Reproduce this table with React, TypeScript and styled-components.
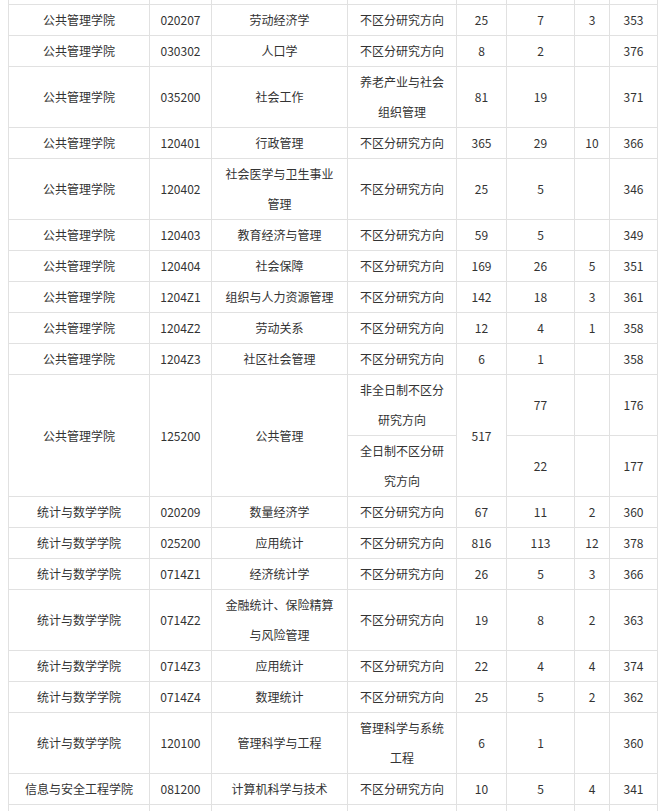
import React from "react";
import styled, { createGlobalStyle } from "styled-components";

const Global = createGlobalStyle`
  html, body { margin: 0; padding: 0; background: #ffffff; }
  body { overflow: hidden; }
`;

const Page = styled.div`
  padding: 0 0 0 8px;
  font-family: "Noto Sans CJK SC", "Microsoft YaHei", sans-serif;
  font-size: 12px;
  color: #333333;
`;

const Table = styled.table`
  border-collapse: collapse;
  table-layout: fixed;
  width: 650px;
  margin-top: -1px;
  background: #ffffff;
`;

const Row = styled.tr<{ $h?: number }>`
  ${(p) => (p.$h ? `height: ${p.$h}px;` : "")}
`;

const Cell = styled.td`
  border: 1px solid #e1e1e1;
  padding: 0 10px;
  line-height: 30px;
  text-align: center;
  vertical-align: middle;
  word-break: break-all;
  overflow: hidden;
`;

const widths = [141, 62, 136, 109, 50, 68, 35, 48];

type R = [string, string, string, string, string, string, string, string];

const before: R[] = [
  ["公共管理学院", "020207", "劳动经济学", "不区分研究方向", "25", "7", "3", "353"],
  ["公共管理学院", "030302", "人口学", "不区分研究方向", "8", "2", "", "376"],
  ["公共管理学院", "035200", "社会工作", "养老产业与社会组织管理", "81", "19", "", "371"],
  ["公共管理学院", "120401", "行政管理", "不区分研究方向", "365", "29", "10", "366"],
  ["公共管理学院", "120402", "社会医学与卫生事业管理", "不区分研究方向", "25", "5", "", "346"],
  ["公共管理学院", "120403", "教育经济与管理", "不区分研究方向", "59", "5", "", "349"],
  ["公共管理学院", "120404", "社会保障", "不区分研究方向", "169", "26", "5", "351"],
  ["公共管理学院", "1204Z1", "组织与人力资源管理", "不区分研究方向", "142", "18", "3", "361"],
  ["公共管理学院", "1204Z2", "劳动关系", "不区分研究方向", "12", "4", "1", "358"],
  ["公共管理学院", "1204Z3", "社区社会管理", "不区分研究方向", "6", "1", "", "358"],
];

const after: R[] = [
  ["统计与数学学院", "020209", "数量经济学", "不区分研究方向", "67", "11", "2", "360"],
  ["统计与数学学院", "025200", "应用统计", "不区分研究方向", "816", "113", "12", "378"],
  ["统计与数学学院", "0714Z1", "经济统计学", "不区分研究方向", "26", "5", "3", "366"],
  ["统计与数学学院", "0714Z2", "金融统计、保险精算与风险管理", "不区分研究方向", "19", "8", "2", "363"],
  ["统计与数学学院", "0714Z3", "应用统计", "不区分研究方向", "22", "4", "4", "374"],
  ["统计与数学学院", "0714Z4", "数理统计", "不区分研究方向", "25", "5", "2", "362"],
  ["统计与数学学院", "120100", "管理科学与工程", "管理科学与系统工程", "6", "1", "", "360"],
  ["信息与安全工程学院", "081200", "计算机科学与技术", "不区分研究方向", "10", "5", "4", "341"],
];

const DataRow = ({ r }: { r: R }) => (
  <Row>
    {r.map((v, i) => (
      <Cell key={i}>{v}</Cell>
    ))}
  </Row>
);

const EmptyRow = ({ h }: { h: number }) => (
  <Row $h={h}>
    {widths.map((_, i) => (
      <Cell key={i} />
    ))}
  </Row>
);

export default function App() {
  return (
    <>
      <Global />
      <Page>
        <Table>
          <colgroup>
            {widths.map((w, i) => (
              <col key={i} style={{ width: w }} />
            ))}
          </colgroup>
          <tbody>
            <EmptyRow h={5} />
            {before.map((r, i) => (
              <DataRow key={"b" + i} r={r} />
            ))}
            <Row>
              <Cell rowSpan={2}>公共管理学院</Cell>
              <Cell rowSpan={2}>125200</Cell>
              <Cell rowSpan={2}>公共管理</Cell>
              <Cell>非全日制不区分研究方向</Cell>
              <Cell rowSpan={2}>517</Cell>
              <Cell>77</Cell>
              <Cell></Cell>
              <Cell>176</Cell>
            </Row>
            <Row>
              <Cell>全日制不区分研究方向</Cell>
              <Cell>22</Cell>
              <Cell></Cell>
              <Cell>177</Cell>
            </Row>
            {after.map((r, i) => (
              <DataRow key={"a" + i} r={r} />
            ))}
            <EmptyRow h={31} />
          </tbody>
        </Table>
      </Page>
    </>
  );
}
